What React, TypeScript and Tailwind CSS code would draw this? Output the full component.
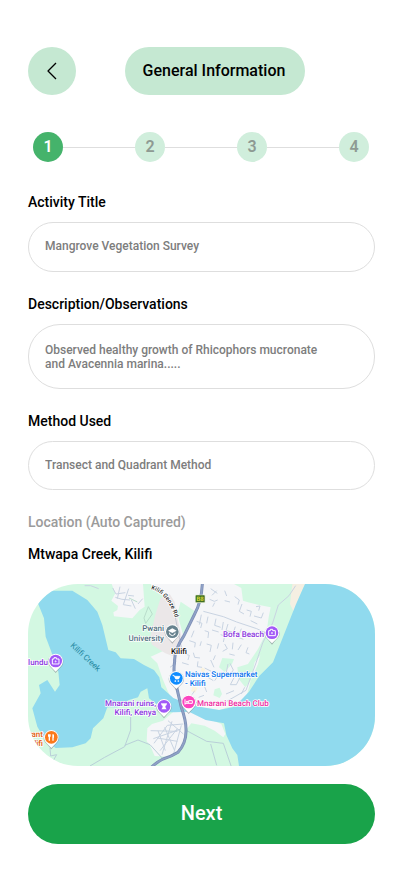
import { Fragment, type ReactNode } from "react"

const steps = [1, 2, 3, 4]

const labelClass = "block text-sm font-medium leading-5 text-black"
const fieldClass =
  "mt-[10px] block w-full border border-[#dedede] bg-white px-4 text-xs font-medium text-[#7d7d7d] outline-none focus:border-[#45b36b]"

function Header() {
  return (
    <header className="flex items-center">
      <button
        type="button"
        aria-label="Back"
        className="flex size-12 items-center justify-center rounded-full bg-[#c5e8d2]"
      >
        <svg width="10" height="18" viewBox="0 0 10 18" fill="none" className="mr-px">
          <path d="M9 1 1 9l8 8" stroke="#000" strokeWidth="1.3" strokeLinejoin="round" />
        </svg>
      </button>
      <h1 className="ml-[49px] flex h-12 w-[180px] items-center justify-center rounded-full bg-[#c5e8d2] pr-0.5 text-base font-medium text-black">
        General Information
      </h1>
    </header>
  )
}

function Stepper({ current }: { current: number }) {
  return (
    <ol className="mt-[37px] ml-[5px] mr-1.5 flex items-center">
      {steps.map((step) => (
        <Fragment key={step}>
          {step > 1 && <li aria-hidden="true" className="h-px flex-1 bg-[#dedede]" />}
          <li
            className={
              step === current
                ? "flex size-[30px] items-center justify-center rounded-full bg-[#45b36b] text-base font-semibold text-white"
                : "flex size-[30px] items-center justify-center rounded-full bg-[#d0eedc] text-base font-semibold text-[#8e9a93]"
            }
          >
            {step}
          </li>
        </Fragment>
      ))}
    </ol>
  )
}

function Pin({ x, y, color, children }: { x: number; y: number; color: string; children: ReactNode }) {
  return (
    <g transform={`translate(${x} ${y})`}>
      <path d="M-23 2a23 23 0 1 1 46 0c0 10-6 15-12 21L0 36-11 23C-17 17-23 12-23 2Z" fill="#7d868c" opacity=".6" />
      <path d="M-22 0a22 22 0 1 1 44 0c0 9-5 15-11 21L0 32-11 21C-17 15-22 9-22 0Z" fill="#fff" />
      <circle r="19" fill={color} />
      {children}
    </g>
  )
}

function Camera() {
  return (
    <g fill="none" stroke="#fff" strokeWidth="3">
      <path d="M-10-6h5v-4h7v4h8V9h-20Z" />
      <circle cx="0" cy="1" r="1.5" />
    </g>
  )
}

function LocationMap() {
  return (
    <svg
      role="img"
      aria-label="Map of Mtwapa Creek, Kilifi"
      viewBox="0 0 347 182"
      preserveAspectRatio="xMidYMid slice"
      className="mt-5 block h-[182px] w-full rounded-[50px]"
    >
      <rect width="347" height="182" fill="#d3f8e2" />
      <g transform="scale(.33333)">
        {/* built-up areas */}
        <g fill="#f5f6f8">
          <path d="M251 0H345L350 68 335 78 313 103 258 97 256 85 268 78 270 66 250 50 262 28Z" />
          <path d="M368 0H618L640 12 645 50 660 55 690 62 728 70 722 100 715 150 700 200 690 240 668 290 655 340 620 362 575 378 530 372 490 362 455 365 430 345 418 318 403 283 388 238 368 218 412 198 440 60 375 15Z" />
          <path d="M358 433 372 420 405 410 440 380 475 378 500 388 535 402 580 420 592 450 586 460 560 440 530 425 490 418 476 435 472 470 455 500 420 518 380 516 366 484 356 472Z" />
        </g>
        <path d="M398 42 425 30 440 54 452 120 462 165 440 218 412 208 372 182 366 162 382 92Z" fill="#ebe7e8" />
        <g fill="#d3f8e2">
          <path d="M458 53 503 83 468 163 448 90Z" />
          <path d="M583 222 618 225 612 240 590 264 573 250Z" />
          <path d="M575 311 582 330 575 342 556 334 560 316Z" />
          <path d="M713 150 718 190 680 235 668 290 652 310 632 285 628 250 660 240 690 195Z" />
        </g>
        <path d="M793 0H831L815 35 798 85 786 60Z" fill="#f5efe2" />
        <path d="M495 305l14 8-8 14-12-6ZM522 250l10 6-6 12-8-8Z" fill="#fbf3df" />

        {/* ocean and creek */}
        <path
          d="M831 0H1041V546H633L628 513 613 493 595 453 588 418 533 408 483 383 440 385 412 385 398 370 363 343 358 313 338 323 330 340 303 348 266 370 238 370 226 403 195 433 188 463 173 478 133 490 83 492 53 470 28 428 13 373 38 328 33 303 58 288 81 323 95 303 91 263 68 198 53 158 48 103 28 53 43 20H133L178 48 208 83 223 123 241 198 263 205 278 223 318 225 348 243 378 258 394 280 400 310 436 342 460 352 500 366 573 378 620 368 663 323 693 277 735 235 803 63Z"
          fill="#90daee"
        />

        {/* side streets */}
        <g fill="none" stroke="#c8d3e1" strokeWidth="3">
          <path d="M254 12l10 18 28-4M262 40l20 6 24 2M276 8l-8 36M302 14l-16 48 24 4M310 48l12 26M330 60l14-16M300 34l18 2M170 5h18l24 9" />
          <path d="M348 102l13-34 12 22-20 28ZM303 42l25 12" stroke="#b9dccb" />
          <path d="M526 82l60 16 40 16 60 20 30 14" />
          <path d="M803 5l-20 30-32 28-17 54-30 60-20 60-30 82-60 34-60 10-30-8-52 2" />
          <path d="M548 14l20 14M566 20l-14 14M590 20l6 16M545 46l14 6 10-4M560 56l-6 12M620 38l14 10-4 14M590 50l16 4M642 60l-8 22 14 8M656 78l14 4-4 16M684 68l12-2-4 14M678 96l22 6 6-16M668 110l20 10" />
          <path d="M520 92l-6 30M506 112l16 6-4 14M540 98l-4 20M530 140l12 4-2 18M564 104l-4 20 18 6M552 138l20 6M586 114l-4 24M600 120l-6 20 18 4M622 128l-6 18M640 134l-10 26 16 6M578 152l12 4-4 18" />
          <path d="M498 140l-8 20M484 170l18 6-2 14M520 172l-4 14M536 180l14 4-4 20M572 178l-4 16M590 180l8 14-14 8M615 176l-2 20M640 182l-10 16M660 190l-6 16 10 4M604 210l16 4" />
          <path d="M470 210l14 4-4 14M496 206l4 14 16 2M462 236l20 6M510 232l-2 16 14 2M548 228l10 22M562 214l-6 14M530 252l20 10M576 266l-16 24M540 280l16 10M606 238l10 20-8 12M625 268l-18 34h18l12-24ZM600 240l-6 30" />
          <path d="M440 240l-14 10M450 262l-20 6 4 18M500 320l-8 12M530 308l6 16M512 340l16-6M594 330l24-10M640 330l10-20" />
          <path d="M378 478l40-54 48-4M368 440l80 2M388 462l60 10M410 430l30 70M396 500l52-66M432 412l-30 100M460 424l-24 88M390 440l22 60M420 410l46 40M376 464l80-28" />
          <path d="M308 398v40l-18 50-60 32-44 26M290 484l40-16 36 14 40 44" stroke="#b9cfd8" />
          <path d="M476 440l60 32 50 6 24 70M548 480l18 64M66 492l2 24 18-4-16 28" stroke="#b9cfd8" />
          <path d="M440 90l12 60 8 40" stroke="#c6c8d4" />
        </g>

        {/* highway */}
        <g fill="none" strokeLinejoin="round">
          <path
            d="M523 0Q520 55 500 90L468 155Q438 200 440 232 434 270 446 310L460 370Q474 410 474 435 476 475 450 505 430 518 405 525 385 535 370 550"
            stroke="#7a8cb3"
            strokeWidth="9"
          />
          <path
            d="M523 0Q520 55 500 90L468 155Q438 200 440 232 434 270 446 310L460 370Q474 410 474 435 476 475 450 505 430 518 405 525 385 535 370 550"
            stroke="#8fa1c6"
            strokeWidth="5"
          />
        </g>
        <rect x="501" y="32" width="31" height="25" rx="3" fill="#dfe6d0" />
        <rect x="503" y="34" width="27" height="21" rx="2" fill="#3f6f22" />

        <Pin x={83} y={231} color="#a259f7">
          <Camera />
        </Pin>
        <Pin x={732} y={146} color="#a259f7">
          <Camera />
        </Pin>
        <Pin x={70} y={460} color="#fb7a1c">
          <path d="M-8-9v7M-4-9v7M-6-3V10M5-9V10M6-8v9" stroke="#fff" strokeWidth="4" />
        </Pin>
        <Pin x={433} y={143} color="#68838f">
          <path d="M0-10 13-3 0 4-13-3Z" fill="#fff" />
          <path d="M-8 3v5L0 12 8 8V3" fill="none" stroke="#fff" strokeWidth="3" />
        </Pin>
        <Pin x={445} y={283} color="#0f8cff">
          <path d="M-11-9h4l5 11h9l4-8H-5Z" fill="#fff" stroke="#fff" strokeWidth="2" />
          <circle cx="-3" cy="8" r="2.5" fill="#fff" />
          <circle cx="6" cy="8" r="2.5" fill="#fff" />
        </Pin>
        <Pin x={482} y={354} color="#fb45c0">
          <path d="M-11-8V8M-11 4H11V-4H0V3" fill="none" stroke="#fff" strokeWidth="3" />
          <circle cx="-5" cy="-1" r="3" fill="#fff" />
        </Pin>
        <Pin x={408} y={367} color="#a259f7">
          <path d="M-8-10H-4V-7H-2V-10H2V-7H4V-10H8V-4L4-1 5 5 8 9H-8L-5 5-4-1-8-4Z" fill="#fff" />
        </Pin>
      </g>

      <path id="genze" d="M123 5C134 8 143 18 149 40" fill="none" />
      <g
        fontSize="8"
        fontWeight="500"
        stroke="#fff"
        strokeWidth="1.5"
        strokeLinejoin="round"
        textRendering="geometricPrecision"
        style={{ paintOrder: "stroke" }}
      >
        <text fontSize="6" fill="#222">
          <textPath href="#genze">Kilifi Genze Rd</textPath>
        </text>
        <text x="172" y="17" fontSize="6" textAnchor="middle" fill="#e6e23c" stroke="none">
          B8
        </text>
        <text transform="translate(42 62) rotate(43)" fill="#2387a0" stroke="none" fontWeight="400">
          Kilifi Creek
        </text>
        <g fill="#52707e" textAnchor="end">
          <text x="136" y="47">Pwani</text>
          <text x="136" y="57">University</text>
        </g>
        <text x="143" y="70" fill="#111">Kilifi</text>
        <g fill="#8a35e0">
          <text x="195" y="53">Bofa Beach</text>
          <text x="20" y="81" textAnchor="end">lundu</text>
          <text x="128" y="122" textAnchor="end">Mnarani ruins,</text>
          <text x="128" y="131" textAnchor="end">Kilifi, Kenya</text>
        </g>
        <g fill="#0a74ee">
          <text x="157" y="93">Naivas Supermarket</text>
          <text x="157" y="102">- Kilifi</text>
        </g>
        <text x="169" y="122" fill="#ee2aa2">Mnarani Beach Club</text>
        <g fill="#e0600a" textAnchor="end">
          <text x="15" y="153">rant</text>
          <text x="15" y="162">ilifi</text>
        </g>
      </g>
    </svg>
  )
}

export default function App() {
  return (
    <main className="min-h-screen bg-white pt-[47px] pr-[27px] pb-[30px] pl-7 font-[Roboto,sans-serif]">
      <Header />
      <Stepper current={1} />

      <form className="mt-[30px]" onSubmit={(e) => e.preventDefault()}>
        <label htmlFor="title" className={labelClass}>
          Activity Title
        </label>
        <input
          id="title"
          type="text"
          defaultValue="Mangrove Vegetation Survey"
          className={`${fieldClass} h-[50px] rounded-full pb-0.5`}
        />

        <label htmlFor="description" className={`${labelClass} mt-[22px]`}>
          Description/Observations
        </label>
        <textarea
          id="description"
          defaultValue={"Observed healthy growth of Rhicophors mucronate\nand Avacennia marina....."}
          className={`${fieldClass} h-[65px] resize-none overflow-hidden rounded-[32px] pt-[18px] leading-[14px]`}
        />

        <label htmlFor="method" className={`${labelClass} mt-[22px]`}>
          Method Used
        </label>
        <input
          id="method"
          type="text"
          defaultValue="Transect and Quadrant Method"
          className={`${fieldClass} h-[49px] rounded-full pb-0.5`}
        />

        <h2 className="mt-[22px] text-sm font-medium leading-5 text-[#9b9b9b]">Location (Auto Captured)</h2>
        <p className="mt-3 text-sm font-medium leading-5 text-black">Mtwapa Creek, Kilifi</p>
        <LocationMap />

        <button
          type="submit"
          className="mt-[18px] h-[60px] w-full rounded-full bg-[#19a34a] pb-0.5 text-xl font-medium text-white"
        >
          Next
        </button>
      </form>
    </main>
  )
}
